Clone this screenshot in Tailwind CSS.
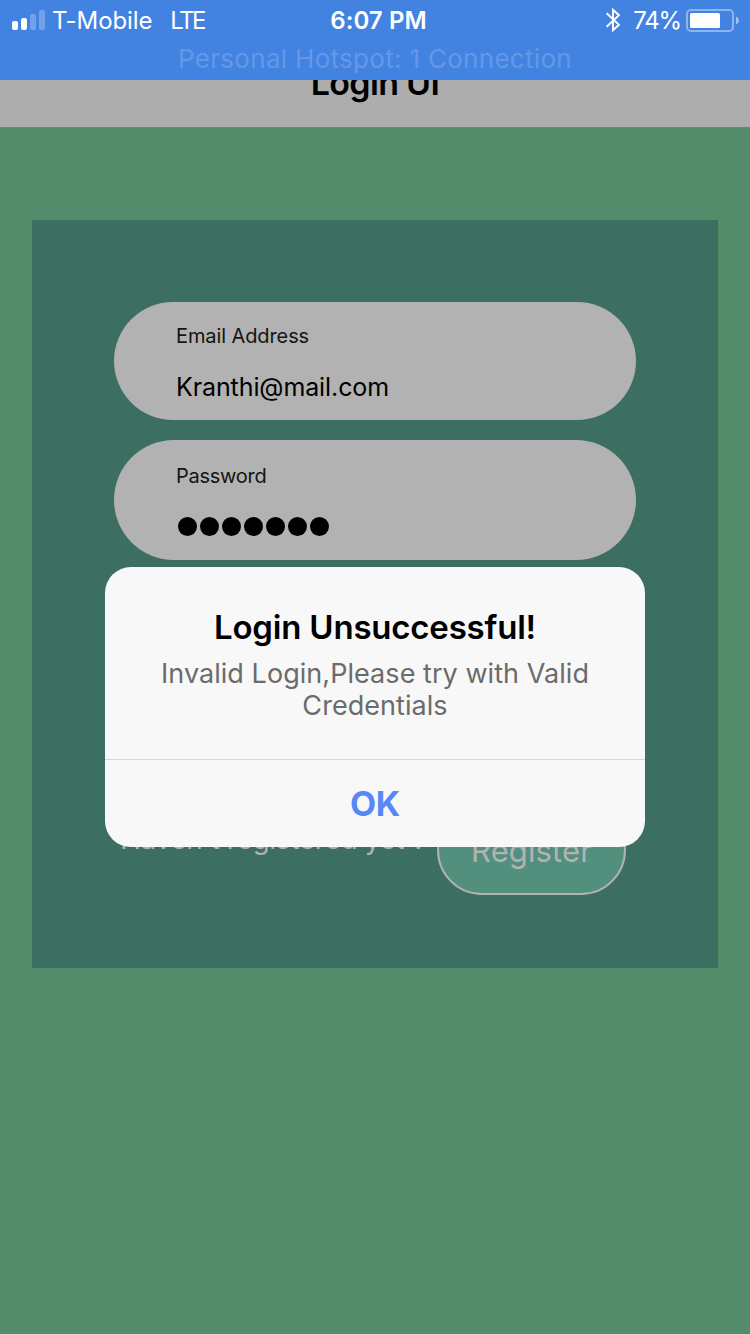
<!DOCTYPE html>
<html lang="en">
<head>
<meta charset="utf-8">
<title>Login UI</title>
<script src="https://cdn.jsdelivr.net/npm/@tailwindcss/browser@4"></script>
</head>
<body class="font-['Inter',sans-serif] w-[750px] h-[1334px] overflow-hidden relative bg-[#528c6b] flex flex-col">
  <!-- Status bar -->
  <header class="h-20 shrink-0 bg-[#4283e2] text-white flex flex-col relative z-10 overflow-hidden">
    <div class="h-10 grid grid-cols-3 items-center pl-3 pr-[11px] text-2xl leading-[38px] whitespace-nowrap">
      <div class="flex items-center">
        <svg class="w-[33px] h-5 mr-[7px]" viewBox="0 0 33 20" fill="#fff">
          <rect x="0" y="11" width="6" height="9" rx="2"/>
          <rect x="9" y="8" width="6" height="12" rx="2"/>
          <rect x="18" y="4" width="6" height="16" rx="2" opacity=".25"/>
          <rect x="27" y="0" width="6" height="20" rx="2" opacity=".25"/>
        </svg>
        <span class="pt-0.5 tracking-[-0.1px]">T-Mobile</span>
        <span class="pt-0.5 ml-[18px] tracking-[-2.5px]">LTE</span>
      </div>
      <div class="text-center font-semibold tracking-[0.1px] pl-[6px] pt-0.5">6:07 PM</div>
      <div class="flex items-center justify-end">
        <svg class="w-[14px] h-6 mr-[13px]" viewBox="0 0 14 24" fill="none" stroke="#fff" stroke-width="1.9">
          <path d="M.6 5.2 13 16.8 7 22.2V1.8L13 7.2.6 18.8"/>
        </svg>
        <span class="pt-0.5 tracking-[-1.2px]">74%</span>
        <svg class="w-[53px] h-6 ml-[5px]" viewBox="0 0 53 24">
          <rect x="1" y="2" width="46" height="21" rx="4" fill="none" stroke="#fff" stroke-opacity=".4" stroke-width="2"/>
          <rect x="4" y="5" width="30" height="15" rx="1.5" fill="#fff"/>
          <path d="M50 8.5C53.8 10 53.8 15 50 16.5Z" fill="#fff" fill-opacity=".5"/>
        </svg>
      </div>
    </div>
    <div class="h-10 text-center text-[26px] leading-[38px] text-[#6498e7] tracking-[0.3px]">Personal Hotspot: 1 Connection</div>
  </header>

  <!-- Navigation bar, partly under the status bar -->
  <nav class="-mt-10 h-[88px] shrink-0 bg-[#adadad] border-b border-[#7c7c7c] text-center text-[34px] leading-[86px] tracking-[-0.7px] font-semibold text-black">Login UI</nav>

  <main class="mt-[92px] mx-8 h-[748px] shrink-0 bg-[#3c6e61] px-[82px] pt-[82px] flex flex-col">
    <div class="h-[118px] rounded-full bg-[#b2b2b2] pl-[62px] pt-5 flex flex-col">
      <label class="text-xl leading-7 tracking-[-0.1px] text-[#141414]">Email Address</label>
      <span class="mt-[21px] text-[25px] leading-8 tracking-[-0.1px] text-black">Kranthi@mail.com</span>
    </div>
    <div class="mt-5 h-[120px] rounded-full bg-[#b2b2b2] pl-[62px] pt-[22px] flex flex-col">
      <label class="text-xl leading-7 tracking-[-0.25px] text-[#141414]">Password</label>
      <div class="mt-[27px] pl-[1.5px] flex gap-[3px]">
        <i class="size-[19px] rounded-full bg-black"></i><i class="size-[19px] rounded-full bg-black"></i><i class="size-[19px] rounded-full bg-black"></i><i class="size-[19px] rounded-full bg-black"></i><i class="size-[19px] rounded-full bg-black"></i><i class="size-[19px] rounded-full bg-black"></i><i class="size-[19px] rounded-full bg-black"></i>
      </div>
    </div>
    <div class="mt-[245px] h-[90px] flex justify-between pl-[6px] pr-[10px] text-[#b2b2b2] whitespace-nowrap">
      <span class="text-[28px] leading-[69px] tracking-[-0.35px]">Haven't registered yet ?</span>
      <button class="w-[189px] h-[90px] rounded-full border-2 border-[#b2b2b2] bg-[#528f7c] pt-[3px] text-[31px] tracking-[0.1px]">Register</button>
    </div>
  </main>

  <!-- Alert dialog -->
  <section class="absolute z-20 left-[105px] top-[567px] w-[540px] h-[280px] rounded-[26px] bg-[#f8f8f8] flex flex-col text-center">
    <div class="h-[192px] pt-10">
      <h1 class="text-[33px] leading-10 tracking-[-0.2px] font-semibold text-black">Login Unsuccessful!</h1>
      <p class="mt-[11px] text-[27px] leading-8 tracking-[0.05px] text-[#6b6b6b]">Invalid Login,Please try with Valid<br>Credentials</p>
    </div>
    <div class="h-[88px] border-t border-[#d8d8da] text-[34px] leading-[88px] tracking-[-0.3px] font-bold text-[#5688f8]">OK</div>
  </section>
</body>
</html>
